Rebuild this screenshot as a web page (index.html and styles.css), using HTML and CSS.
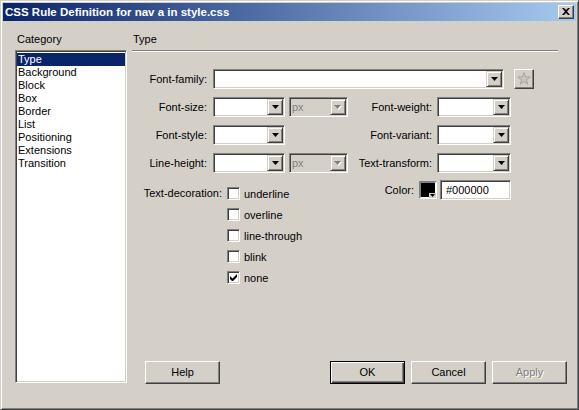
FILE: index.html
```html
<!DOCTYPE html>
<html>
<head>
<meta charset="utf-8">
<link rel="stylesheet" href="styles.css">
</head>
<body>
<div class="window">
  <div class="titlebar">
    <span class="title">CSS Rule Definition for nav a in style.css</span>
    <div class="close"><svg width="8" height="7" viewBox="0 0 8 7"><path d="M0 0h2l2 2 2-2h2L5 3.5 8 7H6L4 5 2 7H0l3-3.5z" fill="#000"/></svg></div>
  </div>
  <div class="body">
    <div class="category">
      <div class="cat-label">Category</div>
      <ul class="listbox">
        <li class="sel">Type</li>
        <li>Background</li>
        <li>Block</li>
        <li>Box</li>
        <li>Border</li>
        <li>List</li>
        <li>Positioning</li>
        <li>Extensions</li>
        <li>Transition</li>
      </ul>
    </div>
    <div class="panel">
      <div class="panel-title">Type</div>
      <div class="rule"></div>
      <div class="form">
        <div class="row">
          <span class="lbl">Font-family:</span>
          <div class="combo w-family"><span class="val"></span><span class="drop"><svg width="7" height="4" viewBox="0 0 7 4"><path d="M0 0h7L3.5 4z" fill="#000"/></svg></span></div>
          <div class="star-btn"><svg width="14" height="14" viewBox="0 0 14 14"><polygon points="7,0.5 8.53,4.9 13.18,4.99 9.47,7.8 10.82,12.26 7,9.6 3.18,12.26 4.53,7.8 0.82,4.99 5.47,4.9" fill="#c9c5bd" stroke="#a8a49e" stroke-width="1"/></svg></div>
        </div>
        <div class="row">
          <span class="lbl">Font-size:</span>
          <div class="combo w-small"><span class="val"></span><span class="drop"><svg width="7" height="4" viewBox="0 0 7 4"><path d="M0 0h7L3.5 4z" fill="#000"/></svg></span></div>
          <div class="combo unit disabled"><span class="val">px</span><span class="drop"><svg width="8" height="5" viewBox="0 0 8 5"><path d="M1 1h7L4.5 5z" fill="#fff"/><path d="M0 0h7L3.5 4z" fill="#808080"/></svg></span></div>
          <span class="lbl2">Font-weight:</span>
          <div class="combo w-right"><span class="val"></span><span class="drop"><svg width="7" height="4" viewBox="0 0 7 4"><path d="M0 0h7L3.5 4z" fill="#000"/></svg></span></div>
        </div>
        <div class="row">
          <span class="lbl">Font-style:</span>
          <div class="combo w-small"><span class="val"></span><span class="drop"><svg width="7" height="4" viewBox="0 0 7 4"><path d="M0 0h7L3.5 4z" fill="#000"/></svg></span></div>
          <div class="unit-spacer"></div>
          <span class="lbl2">Font-variant:</span>
          <div class="combo w-right"><span class="val"></span><span class="drop"><svg width="7" height="4" viewBox="0 0 7 4"><path d="M0 0h7L3.5 4z" fill="#000"/></svg></span></div>
        </div>
        <div class="row">
          <span class="lbl">Line-height:</span>
          <div class="combo w-small"><span class="val"></span><span class="drop"><svg width="7" height="4" viewBox="0 0 7 4"><path d="M0 0h7L3.5 4z" fill="#000"/></svg></span></div>
          <div class="combo unit disabled"><span class="val">px</span><span class="drop"><svg width="8" height="5" viewBox="0 0 8 5"><path d="M1 1h7L4.5 5z" fill="#fff"/><path d="M0 0h7L3.5 4z" fill="#808080"/></svg></span></div>
          <span class="lbl2">Text-transform:</span>
          <div class="combo w-right"><span class="val"></span><span class="drop"><svg width="7" height="4" viewBox="0 0 7 4"><path d="M0 0h7L3.5 4z" fill="#000"/></svg></span></div>
        </div>
        <div class="row5">
          <div class="decor">
            <span class="lbl-decor">Text-decoration:</span>
            <div class="checks">
              <div class="check"><span class="box"></span>underline</div>
              <div class="check"><span class="box"></span>overline</div>
              <div class="check"><span class="box"></span>line-through</div>
              <div class="check"><span class="box"></span>blink</div>
              <div class="check"><span class="box"><svg width="7" height="7" viewBox="0 0 7 7"><path d="M0 2v3l2 2h1l4-4V0L2.5 4.5z" fill="#000"/></svg></span>none</div>
            </div>
          </div>
          <div class="color">
            <span class="lbl-color">Color:</span>
            <div class="swatch"><span class="swatch-arrow"><svg width="5" height="3" viewBox="0 0 5 3"><path d="M0 0h5L2.5 3z" fill="#000"/></svg></span></div>
            <div class="text-input">#000000</div>
          </div>
        </div>
      </div>
      <div class="footer">
        <div class="btn">Help</div>
        <div class="btn default ok">OK</div>
        <div class="btn">Cancel</div>
        <div class="btn disabled-btn">Apply</div>
      </div>
    </div>
  </div>
</div>
</body>
</html>
```
FILE: styles.css
```css
* { box-sizing: border-box; }
html, body { margin: 0; padding: 0; }
body {
  width: 579px;
  height: 410px;
  font-family: "Liberation Sans", Arial, sans-serif;
  font-size: 11px;
  color: #000;
  background: #d4d0c8;
}
.window {
  width: 579px;
  height: 410px;
  background: #d4d0c8;
  border: 1px solid;
  border-color: #d4d0c8 #404040 #404040 #d4d0c8;
  box-shadow: inset 1px 1px 0 #ffffff, inset -1px -1px 0 #808080;
  padding: 2px;
  display: flex;
  flex-direction: column;
}
.titlebar {
  height: 18px;
  flex: none;
  display: flex;
  align-items: center;
  justify-content: space-between;
  padding: 0 2px 0 2px;
  background: linear-gradient(to right, #0a246a 0%, #a6caf0 100%);
}
.title {
  color: #fff;
  font-weight: bold;
  font-size: 11.5px;
  white-space: nowrap;
}
.close {
  width: 16px;
  height: 14px;
  background: #d4d0c8;
  border: 1px solid;
  border-color: #fff #404040 #404040 #fff;
  box-shadow: inset -1px -1px 0 #808080;
  display: flex;
  align-items: center;
  justify-content: center;
  padding-bottom: 1px;
}
.body {
  flex: 1;
  display: flex;
  gap: 5px;
  padding: 12px 9px 23px 12px;
}
.category {
  width: 112px;
  flex: none;
  display: flex;
  flex-direction: column;
}
.cat-label {
  height: 13px;
  line-height: 13px;
  padding-left: 2px;
  margin-bottom: 4px;
}
.listbox {
  list-style: none;
  margin: 0;
  height: 333px;
  background: #fff;
  border: 1px solid;
  border-color: #808080 #fff #fff #808080;
  box-shadow: inset 1px 1px 0 #404040, inset -1px -1px 0 #d4d0c8;
  padding: 2px 1px 1px 1px;
}
.listbox li {
  height: 13px;
  line-height: 13px;
  padding-left: 1px;
  white-space: nowrap;
}
.listbox li.sel {
  background: #0a246a;
  color: #fff;
}
.panel {
  flex: 1;
  display: flex;
  flex-direction: column;
}
.panel-title {
  height: 13px;
  line-height: 13px;
  padding-left: 1px;
  margin-bottom: 4px;
}
.rule {
  height: 2px;
  border-top: 1px solid #808080;
  border-bottom: 1px solid #fff;
  margin-right: 9px;
}
.form {
  margin-top: 17px;
  display: flex;
  flex-direction: column;
  gap: 8px;
}
.row {
  display: flex;
  align-items: center;
  height: 20px;
}
.lbl {
  width: 75px;
  text-align: right;
  margin-right: 6px;
  white-space: nowrap;
}
.lbl2 {
  width: 84px;
  text-align: right;
  margin-right: 5px;
  white-space: nowrap;
}
.combo {
  height: 20px;
  display: flex;
  background: #fff;
  border: 1px solid;
  border-color: #808080 #fff #fff #808080;
  box-shadow: inset 1px 1px 0 #404040, inset -1px -1px 0 #d4d0c8;
  padding: 1px;
}
.combo .val {
  flex: 1;
  line-height: 16px;
  padding-left: 2px;
}
.combo .drop {
  width: 16px;
  height: 16px;
  flex: none;
  background: #d4d0c8;
  border: 1px solid;
  border-color: #d4d0c8 #404040 #404040 #d4d0c8;
  box-shadow: inset 1px 1px 0 #fff, inset -1px -1px 0 #808080;
  display: flex;
  align-items: center;
  justify-content: center;
}
.combo.disabled {
  background: #d4d0c8;
}
.combo.disabled .val {
  color: #808080;
  padding-left: 1px;
}
.w-family { width: 291px; }
.w-small { width: 72px; }
.unit { width: 59px; margin-left: 4px; }
.unit-spacer { width: 59px; margin-left: 4px; }
.w-right { width: 74px; }
.star-btn {
  width: 20px;
  height: 20px;
  margin-left: 10px;
  background: #d4d0c8;
  border: 1px solid;
  border-color: #fff #404040 #404040 #fff;
  box-shadow: inset -1px -1px 0 #808080;
  display: flex;
  align-items: center;
  justify-content: center;
}
.row5 {
  display: flex;
  align-items: flex-start;
  width: 379px;
  margin-top: -1px;
}
.decor {
  display: flex;
  align-items: flex-start;
  margin-top: 3px;
}
.lbl-decor {
  width: 90px;
  text-align: right;
  margin-right: 5px;
  height: 21px;
  line-height: 21px;
  white-space: nowrap;
}
.checks {
  display: flex;
  flex-direction: column;
}
.check {
  height: 21px;
  display: flex;
  align-items: center;
  white-space: nowrap;
}
.box {
  width: 13px;
  height: 13px;
  margin-right: 4px;
  background: #fff;
  border: 1px solid;
  border-color: #808080 #fff #fff #808080;
  box-shadow: inset 1px 1px 0 #404040, inset -1px -1px 0 #d4d0c8;
  display: flex;
  align-items: center;
  justify-content: center;
}
.color {
  margin-left: auto;
  display: flex;
  align-items: center;
  height: 20px;
}
.lbl-color {
  margin-right: 5px;
}
.swatch {
  position: relative;
  width: 18px;
  height: 18px;
  background: #000;
  border: 2px solid;
  border-color: #808080 #fff #fff #808080;
  margin-right: 3px;
}
.swatch-arrow {
  position: absolute;
  right: -1px;
  bottom: -1px;
  width: 7px;
  height: 5px;
  background: #d4d0c8;
  display: flex;
  align-items: center;
  justify-content: center;
}
.text-input {
  width: 71px;
  height: 20px;
  background: #fff;
  border: 1px solid;
  border-color: #808080 #fff #fff #808080;
  box-shadow: inset 1px 1px 0 #404040, inset -1px -1px 0 #d4d0c8;
  padding-left: 5px;
  line-height: 18px;
}
.footer {
  margin-top: auto;
  display: flex;
  gap: 6px;
  padding-left: 13px;
}
.btn {
  width: 75px;
  height: 23px;
  background: #d4d0c8;
  border: 1px solid;
  border-color: #fff #404040 #404040 #fff;
  box-shadow: inset -1px -1px 0 #808080;
  display: flex;
  align-items: center;
  justify-content: center;
  line-height: 13px;
}
.btn.ok { margin-left: auto; }
.btn.default {
  border: 1px solid #000;
  box-shadow: inset 1px 1px 0 #fff, inset -1px -1px 0 #404040, inset -2px -2px 0 #808080;
}
.disabled-btn {
  color: #808080;
  text-shadow: 1px 1px 0 #fff;
}
```
